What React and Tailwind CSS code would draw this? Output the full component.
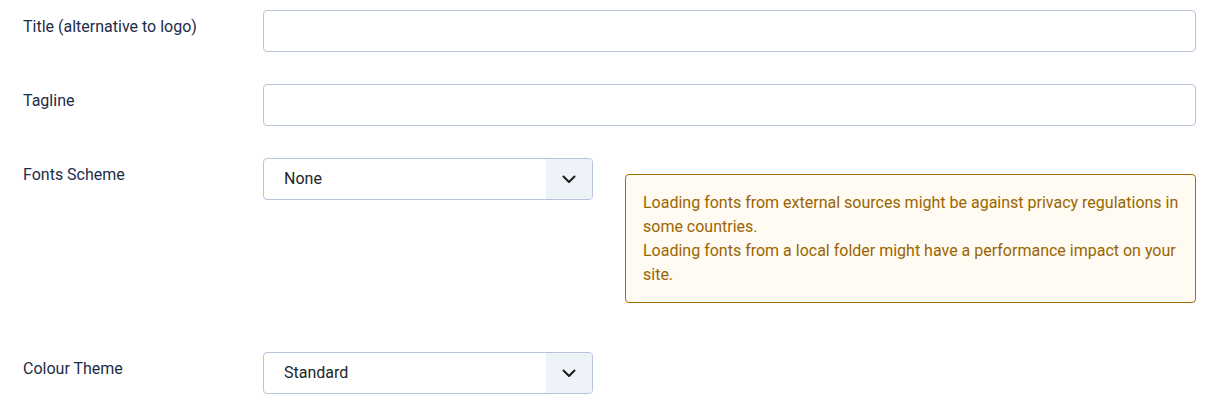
import React from "react";

function Label({ children }) {
  return <div className="w-[240px] shrink-0 pl-[23px] pt-[5px] text-[16px] leading-[24px] text-[#1d2c48]">{children}</div>;
}

function Chevron() {
  return (
    <svg width="16" height="16" viewBox="0 0 16 16" fill="none" stroke="#1b1b1b" strokeWidth="2" strokeLinecap="round" strokeLinejoin="round">
      <path d="M2.5 5.5 8 11l5.5-5.5" />
    </svg>
  );
}

function Select({ value }) {
  return (
    <div className="flex h-[42px] w-[330px] overflow-hidden rounded-[4px] border border-[#b6c5db] bg-white">
      <div className="flex flex-1 items-center pl-[20px] text-[16px] text-[#22262a]">{value}</div>
      <div className="flex w-[46px] items-center justify-center bg-[#eef3fa]">
        <Chevron />
      </div>
    </div>
  );
}

export default function App() {
  return (
    <div className="min-h-[417px] bg-white pt-[10px] pr-[20px] font-['Roboto',sans-serif]">
      {/* Title */}
      <div className="mb-[32px] flex">
        <Label>Title (alternative to logo)</Label>
        <input type="text" className="h-[42px] flex-1 ml-[23px] rounded-[4px] border border-[#b6c5db] bg-white px-3 outline-none" />
      </div>

      {/* Tagline */}
      <div className="mb-[32px] flex">
        <Label>Tagline</Label>
        <input type="text" className="h-[42px] flex-1 ml-[23px] rounded-[4px] border border-[#b6c5db] bg-white px-3 outline-none" />
      </div>

      {/* Fonts Scheme */}
      <div className="mb-[49px] flex">
        <Label>Fonts Scheme</Label>
        <div className="ml-[23px]">
          <Select value="None" />
        </div>
        <div className="ml-[32px] mt-[16px] flex-1 rounded-[4px] border border-[#a86f00] bg-[#fffbf2] pl-[17px] pr-[10px] pt-[16px] pb-[15px] text-[16px] leading-[24px] text-[#9a6500]">
          <p>Loading fonts from external sources might be against privacy regulations in some countries.</p>
          <p>Loading fonts from a local folder might have a performance impact on your site.</p>
        </div>
      </div>

      {/* Colour Theme */}
      <div className="flex">
        <Label>Colour Theme</Label>
        <div className="ml-[23px]">
          <Select value="Standard" />
        </div>
      </div>
    </div>
  );
}
